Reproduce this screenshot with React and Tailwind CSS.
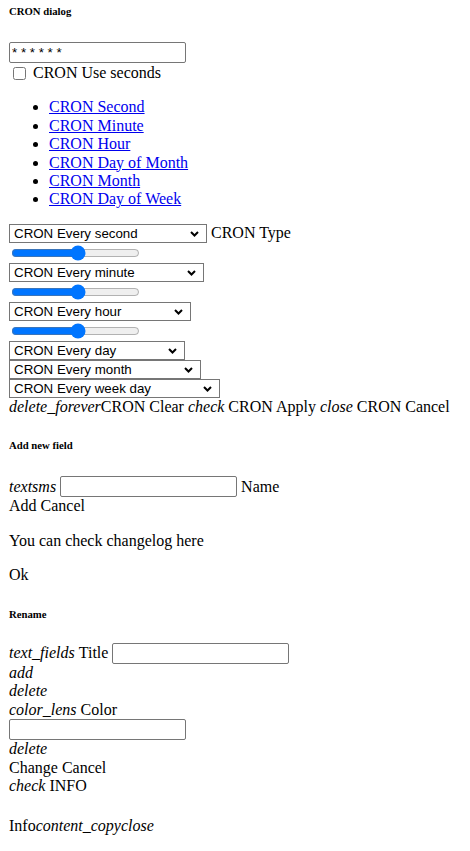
import React from 'react';

const Sel = ({ label, w }) => (
  <span className={`relative inline-flex items-center h-[19px] ${w} border border-[#767676] bg-white font-['Liberation_Sans',sans-serif] text-[13.33px] leading-[15px] text-black align-middle`}>
    <select className="appearance-none w-full h-full pl-[4px] pr-[20px] bg-transparent outline-none" defaultValue={label}>
      <option>{label}</option>
    </select>
    <svg className="absolute right-[7px] top-[6px] pointer-events-none" width="9" height="6" viewBox="0 0 9 6">
      <path d="M1 1 L4.5 4.5 L8 1" fill="none" stroke="#000" strokeWidth="2" />
    </svg>
  </span>
);

const Range = () => (
  <div className="h-[20px] flex items-center">
    <input type="range" defaultValue={52} className="m-[2px] w-[129px] h-[16px] accent-[#0075ff]" />
  </div>
);

const TextBox = ({ value = '', w = 'w-[177px]' }) => (
  <input
    type="text"
    defaultValue={value}
    className={`${w} h-[21px] border border-[#767676] rounded-[2px] px-[2px] font-['Liberation_Sans',sans-serif] text-[13.33px] leading-[15px] text-black bg-white align-top`}
  />
);

const Icon = ({ children }) => <i className="italic">{children}</i>;

export default function App() {
  const tabs = ['CRON Second', 'CRON Minute', 'CRON Hour', 'CRON Day of Month', 'CRON Month', 'CRON Day of Week'];

  return (
    <div className="min-h-[851px] bg-white pl-[9px] pr-[8px] font-['Liberation_Serif',serif] text-[16px] leading-[18.4px] text-black">
      {/* CRON dialog */}
      <h6 className="pt-[5px] text-[10.72px] leading-[12.3px] font-bold">CRON dialog</h6>
      <div className="mt-[25px] h-[21px]">
        <TextBox value="* * * * * *" />
      </div>
      <div className="h-[19px] flex items-center pt-[1px]">
        <input type="checkbox" className="ml-[4px] mr-[3px] w-[13px] h-[13px]" />
        <span className="ml-[4px]">CRON Use seconds</span>
      </div>
      <ul className="mt-[16px] mb-[15px] pl-[40px] list-disc">
        {tabs.map((t) => (
          <li key={t}>
            <a href="#" className="text-[#0000ee] underline">{t}</a>
          </li>
        ))}
      </ul>

      <div className="h-[19px] flex items-center gap-[4px]">
        <Sel label="CRON Every second" w="w-[198px]" />
        <span>CRON Type</span>
      </div>
      <Range />
      <div className="h-[19px] flex items-center">
        <Sel label="CRON Every minute" w="w-[195px]" />
      </div>
      <Range />
      <div className="h-[19px] flex items-center">
        <Sel label="CRON Every hour" w="w-[182px]" />
      </div>
      <Range />
      <div className="h-[19px] flex items-center">
        <Sel label="CRON Every day" w="w-[176px]" />
      </div>
      <div className="h-[19px] flex items-center">
        <Sel label="CRON Every month" w="w-[192px]" />
      </div>
      <div className="h-[19px] flex items-center">
        <Sel label="CRON Every week day" w="w-[211px]" />
      </div>
      <div className="h-[18.4px] whitespace-nowrap">
        <Icon>delete_forever</Icon>CRON Clear <Icon>check</Icon> CRON Apply <Icon>close</Icon> CRON Cancel
      </div>

      {/* Add new field */}
      <h6 className="mt-[23px] text-[10.72px] leading-[12.3px] font-bold">Add new field</h6>
      <div className="mt-[25px] h-[21px] flex items-center gap-[4px]">
        <Icon>textsms</Icon>
        <TextBox />
        <span>Name</span>
      </div>
      <div>Add Cancel</div>
      <p className="mt-[16px]">You can check changelog here</p>
      <p className="mt-[16px]">Ok</p>

      {/* Rename */}
      <h6 className="mt-[23px] text-[10.72px] leading-[12.3px] font-bold">Rename</h6>
      <div className="mt-[23px] h-[21px] flex items-center gap-[4px]">
        <Icon>text_fields</Icon>
        <span>Title</span>
        <TextBox />
      </div>
      <div><Icon>add</Icon></div>
      <div><Icon>delete</Icon></div>
      <div><Icon>color_lens</Icon> Color</div>
      <div className="h-[21px]">
        <TextBox />
      </div>
      <div><Icon>delete</Icon></div>
      <div>Change Cancel</div>
      <div><Icon>check</Icon> INFO</div>
      <div className="mt-[22px]">
        Info<Icon>content_copy</Icon><Icon>close</Icon>
      </div>
    </div>
  );
}
